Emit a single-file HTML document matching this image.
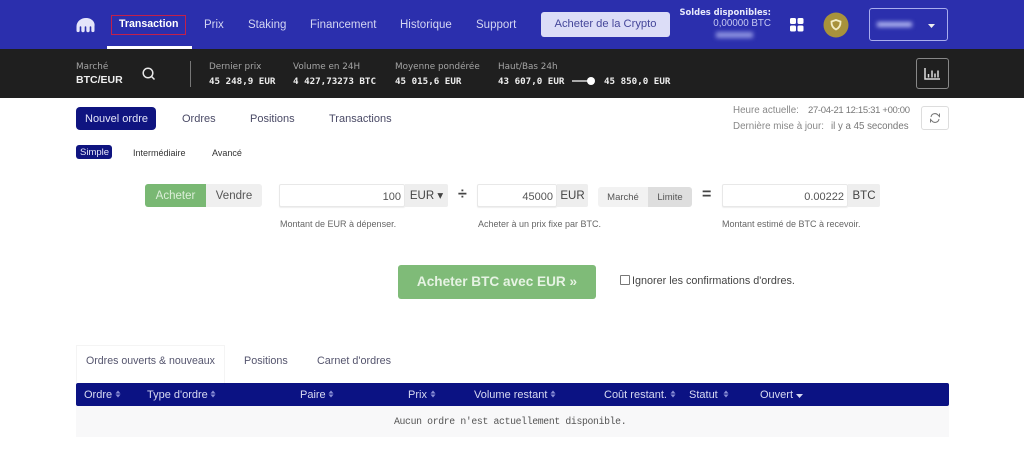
<!DOCTYPE html>
<html lang="fr"><head><meta charset="utf-8"><title>Transaction</title>
<style>
html,body{margin:0;padding:0;background:#fff}
body{width:1024px;height:458px;overflow:hidden;position:relative;font-family:"Liberation Sans",sans-serif}
div,span.t,svg{position:absolute}
.t{white-space:nowrap;line-height:14px}
.nav{color:#d3d5f2;font-size:11.5px;top:18px}
.lab{color:#a5a5a5;top:59px;font-family:"DejaVu Sans",sans-serif;font-size:8.8px}
.val{color:#eee;font-weight:bold;top:74px;font-family:"DejaVu Sans Mono","Liberation Mono",monospace;font-size:9.2px}
.tab{color:#4a4a66;font-size:11px;top:112px}
.sub{color:#333;font-size:9px;top:146px}
.field{background:#fff;border:1px solid #e8e8e8;box-sizing:border-box;height:23px;top:184px;border-radius:2px;box-shadow:0 1px 1px #eee}
.addon{background:#eee;top:184px;height:23px;color:#444;font-size:11.5px;line-height:24px;text-align:center}
.num{color:#555;font-size:11px;top:189px;text-align:right}
.hint{color:#666;font-size:9px;top:217px}
.th{color:#d8daf2;font-size:11px;top:387px}
</style></head><body>
<div style="left:0;top:0;width:1024px;height:49px;background:#2b2fad"></div>
<div style="left:0;top:49px;width:1024px;height:49px;background:#1f1f1f"></div>
<svg style="left:76px;top:17px" width="20" height="16" viewBox="0 0 20 16"><path d="M10 1C4.500 1 .5 4.800.5 9.500v4a1.600 1.600 0 0 0 3.200 0v-3.500a.8.8 0 0 1 1.600 0v3.500a1.700 1.700 0 0 0 3.400 0v-3.500a.8.8 0 0 1 1.600 0v3.500a1.700 1.700 0 0 0 3.400 0v-3.500a.8.8 0 0 1 1.600 0v3.500a1.600 1.600 0 0 0 3.200 0v-4C19.500 4.800 15.500 1 10 1z" fill="#e4e4fa"/></svg>
<div style="left:111px;top:15px;width:75px;height:20px;border:1px solid #c4204a;box-sizing:border-box"></div>
<span class="t" style="left:119px;top:17px;color:#fff;font-weight:bold;font-size:10.6px">Transaction</span>
<div style="left:107px;top:46px;width:85px;height:3px;background:#fff"></div>
<span class="t nav" style="left:204px">Prix</span>
<span class="t nav" style="left:248px">Staking</span>
<span class="t nav" style="left:310px">Financement</span>
<span class="t nav" style="left:400px">Historique</span>
<span class="t nav" style="left:476px">Support</span>
<div style="left:541px;top:12px;width:129px;height:25px;background:#dcddf7;border-radius:3px;color:#45479a;font-size:11.2px;line-height:25px;text-align:center">Acheter de la Crypto</div>
<span class="t" style="right:253px;top:5px;color:#e8e9fb;font-weight:bold;font-size:8.4px;font-family:'DejaVu Sans',sans-serif">Soldes disponibles:</span>
<span class="t" style="right:253px;top:17px;color:#c6c9f2;font-size:9.800px">0,00000 BTC</span>
<div style="left:716px;top:32px;width:37px;height:6px;background:#8e93e0;filter:blur(2px)"></div>
<svg style="left:790px;top:18px" width="14" height="14"><rect x="0" y="0" width="6" height="6" rx="1.500" fill="#fff"/><rect x="7.500" y="0" width="6" height="6" rx="1.500" fill="#fff"/><rect x="0" y="7.500" width="6" height="6" rx="1.500" fill="#fff"/><rect x="7.500" y="7.500" width="6" height="6" rx="1.500" fill="#fff"/></svg>
<svg style="left:823px;top:12px" width="26" height="26" viewBox="0 0 26 26"><circle cx="13" cy="13" r="12.500" fill="#a8923c"/><path d="M13 8l4.500 1.500c.2 3.500-1.200 6.300-4.500 8-3.300-1.700-4.700-4.500-4.500-8z" fill="none" stroke="#f2ecc4" stroke-width="1.800"/></svg>
<div style="left:869px;top:8px;width:79px;height:33px;border:1px solid #a9adee;border-radius:3px;box-sizing:border-box"></div>
<div style="left:877px;top:22px;width:35px;height:5px;background:#b3b7f2;filter:blur(2px)"></div>
<svg style="left:928px;top:24px" width="7" height="4"><path d="M0 0h7L3.500 4z" fill="#eee"/></svg>

<span class="t lab" style="left:76px;top:60px">Marché</span>
<span class="t" style="left:76px;top:73px;color:#eee;font-weight:bold;font-size:10.500px">BTC/EUR</span>
<svg style="left:141px;top:66px" width="15" height="15" fill="none" stroke="#e8e8e8" stroke-width="1.500"><circle cx="7" cy="7" r="4.800"/><path d="M10.500 10.500l3 3"/></svg>
<div style="left:190px;top:61px;width:1px;height:26px;background:#777"></div>
<span class="t lab" style="left:209px;top:60px">Dernier prix</span><span class="t val" style="left:209px;top:75px">45 248,9  EUR</span>
<span class="t lab" style="left:293px;top:60px">Volume en 24H</span><span class="t val" style="left:293px;top:75px">4 427,73273  BTC</span>
<span class="t lab" style="left:395px;top:60px">Moyenne pondérée</span><span class="t val" style="left:395px;top:75px">45 015,6  EUR</span>
<span class="t lab" style="left:498px;top:60px">Haut/Bas 24h</span><span class="t val" style="left:498px;top:75px">43 607,0  EUR</span>
<div style="left:572px;top:80px;width:18px;height:2px;background:#aaa"></div>
<div style="left:587px;top:77px;width:8px;height:8px;border-radius:5px;background:#fff"></div>
<span class="t val" style="left:604px;top:75px">45 850,0  EUR</span>
<div style="left:916px;top:58px;width:33px;height:31px;border:1px solid #888;border-radius:3px;box-sizing:border-box"></div>
<svg style="left:924px;top:66px" width="17" height="15" fill="none" stroke="#ddd" stroke-width="1.500"><path d="M1 2v11h15M4.500 11.500V8M8 11.500V4.500M11 11.500V7.500M14 11.500V4.500"/></svg>

<div style="left:76px;top:107px;width:80px;height:23px;background:#0f1480;border-radius:4px"></div>
<span class="t tab" style="left:85px;color:#e6e7fa">Nouvel ordre</span>
<span class="t tab" style="left:182px">Ordres</span>
<span class="t tab" style="left:250px">Positions</span>
<span class="t tab" style="left:329px">Transactions</span>
<div style="left:76px;top:145px;width:36px;height:14px;background:#0f1480;border-radius:3px"></div>
<span class="t sub" style="left:80px;color:#e6e7fa;font-size:9.500px;top:146px">Simple</span>
<span class="t sub" style="left:133px">Intermédiaire</span>
<span class="t sub" style="left:212px">Avancé</span>

<span class="t" style="left:733px;top:104px;color:#888;font-size:9.800px">Heure actuelle:</span>
<span class="t" style="left:808px;top:104px;color:#777;font-size:9.500px;letter-spacing:-.33px">27-04-21 12:15:31 +00:00</span>
<span class="t" style="left:733px;top:120px;color:#888;font-size:9.800px">Dernière mise à jour:</span>
<span class="t" style="left:831px;top:120px;color:#777;font-size:9.700px">il y a 45 secondes</span>
<div style="left:921px;top:106px;width:28px;height:24px;border:1px solid #ddd;border-radius:3px;box-sizing:border-box"></div>
<svg style="left:929px;top:112px" width="12" height="12" fill="none" stroke="#777" stroke-width="1"><path d="M2 5a4 4 0 0 1 7-2l1.500 1.500V1.500M10 7a4 4 0 0 1-7 2L1.500 7.500v3"/></svg>

<div style="left:145px;top:184px;width:61px;height:23px;background:#79b873;border-radius:3px 0 0 3px;color:#dcefd9;font-size:11.500px;line-height:24px;text-align:center">Acheter</div>
<div style="left:206px;top:184px;width:56px;height:23px;background:#efefef;border-radius:0 3px 3px 0;color:#555;font-size:11.500px;line-height:24px;text-align:center">Vendre</div>
<div class="field" style="left:279px;width:126px"></div><span class="t num" style="left:279px;width:122px;top:190px">100</span>
<div class="addon" style="left:405px;width:43px;border-radius:0 2px 2px 0">EUR ▾</div>
<span class="t" style="left:458px;top:188px;color:#444;font-size:16px;font-weight:bold">÷</span>
<div class="field" style="left:477px;width:80px"></div><span class="t num" style="left:477px;width:76px;top:190px">45000</span>
<div class="addon" style="left:557px;width:31px;border-radius:0 2px 2px 0">EUR</div>
<div style="left:598px;top:187px;width:50px;height:20px;background:#f2f2f2;border-radius:3px 0 0 3px;color:#555;font-size:9.500px;line-height:21px;text-align:center">Marché</div>
<div style="left:648px;top:187px;width:44px;height:20px;background:#dedede;border-radius:0 3px 3px 0;color:#555;font-size:9.500px;line-height:21px;text-align:center">Limite</div>
<span class="t" style="left:702px;top:188px;color:#444;font-size:16px;font-weight:bold">=</span>
<div class="field" style="left:722px;width:126px"></div><span class="t num" style="left:722px;width:122px;top:190px">0.00222</span>
<div class="addon" style="left:848px;width:32px;border-radius:0 2px 2px 0">BTC</div>
<span class="t hint" style="left:280px">Montant de EUR à dépenser.</span>
<span class="t hint" style="left:478px">Acheter à un prix fixe par BTC.</span>
<span class="t hint" style="left:722px">Montant estimé de BTC à recevoir.</span>

<div style="left:398px;top:265px;width:198px;height:34px;background:#7fbb78;border-radius:3px;color:#e6f3e3;font-size:13.600px;font-weight:bold;line-height:34px;text-align:center">Acheter BTC avec EUR »</div>
<div style="left:620px;top:275px;width:8px;height:8px;border:1px solid #777;border-radius:1px;background:#fff"></div>
<span class="t" style="left:632px;top:274px;color:#444;font-size:10.800px">Ignorer les confirmations d'ordres.</span>

<div style="left:76px;top:345px;width:149px;height:38px;border:1px solid #f4f4f4;border-bottom:0;box-sizing:border-box"></div>
<span class="t" style="left:86px;top:354px;color:#55556e;font-size:10.600px">Ordres ouverts &amp; nouveaux</span>
<span class="t" style="left:244px;top:354px;color:#55556e;font-size:10.800px">Positions</span>
<span class="t" style="left:317px;top:354px;color:#55556e;font-size:10.800px">Carnet d'ordres</span>
<div style="left:76px;top:383px;width:873px;height:23px;background:#0b1283;border-radius:2px"></div>
<div style="left:76px;top:406px;width:873px;height:31px;background:#f8f8f9"></div>
<span class="t th" style="left:84px;top:388px">Ordre</span>
<span class="t th" style="left:147px;top:388px">Type d'ordre</span>
<span class="t th" style="left:300px;top:388px">Paire</span>
<span class="t th" style="left:408px;top:388px">Prix</span>
<span class="t th" style="left:474px;top:388px">Volume restant</span>
<span class="t th" style="left:604px;top:388px">Coût restant.</span>
<span class="t th" style="left:689px;top:388px">Statut</span>
<span class="t th" style="left:760px;top:388px">Ouvert</span>
<svg style="left:0;top:388px" width="1024" height="12" fill="#8a8fd6"><path d="M115.500 5.500l2.500-3 2.500 3zM115.500 6.500l2.500 3 2.500-3zM210.500 5.500l2.500-3 2.500 3zM210.500 6.500l2.500 3 2.500-3zM328.500 5.500l2.500-3 2.500 3zM328.500 6.500l2.500 3 2.500-3zM430.500 5.500l2.500-3 2.500 3zM430.500 6.500l2.500 3 2.500-3zM550.500 5.500l2.500-3 2.500 3zM550.500 6.500l2.500 3 2.500-3zM670.500 5.500l2.500-3 2.500 3zM670.500 6.500l2.500 3 2.500-3zM723.500 5.500l2.500-3 2.500 3zM723.500 6.500l2.500 3 2.500-3z"/></svg>
<svg style="left:796px;top:394px" width="7" height="4"><path d="M0 0h7L3.500 4z" fill="#d8daf2"/></svg>
<span class="t" style="left:394px;top:415px;color:#555;font-family:'Liberation Mono',monospace;font-size:9.800px;letter-spacing:-.35px">Aucun ordre n'est actuellement disponible.</span>
</body></html>
